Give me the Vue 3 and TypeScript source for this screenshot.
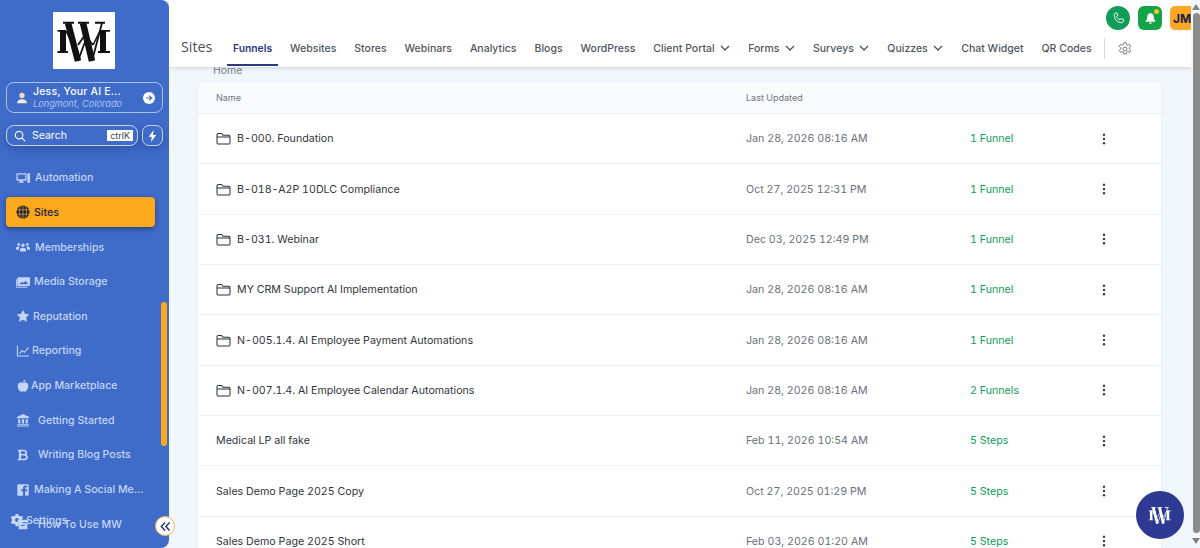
<script setup lang="ts">
interface Row { name: string; date: string; status: string; folder: boolean }
interface NavItem { label: string; gap: number; icon: string; active?: boolean }
interface Tab { label: string; caret?: boolean; active?: boolean }

const tabs: Tab[] = [
  { label: 'Funnels', active: true },
  { label: 'Websites' },
  { label: 'Stores' },
  { label: 'Webinars' },
  { label: 'Analytics' },
  { label: 'Blogs' },
  { label: 'WordPress' },
  { label: 'Client Portal', caret: true },
  { label: 'Forms', caret: true },
  { label: 'Surveys', caret: true },
  { label: 'Quizzes', caret: true },
  { label: 'Chat Widget' },
  { label: 'QR Codes' },
]

// Monogram strokes: x1, y1, x2, y2, width
const mark: number[][] = [
  [15, 11, 25, 49, 6.5],
  [25, 49, 33, 27, 1.8],
  [30, 11, 39, 49, 6.5],
  [39, 49, 49, 11, 1.8],
  [10, 10.8, 21, 10.8, 2],
  [25, 10.8, 36, 10.8, 2],
  [42, 10.8, 52, 10.8, 2],
  [10, 18, 10, 40, 6],
  [4.500, 18.800, 13, 18.800, 1.800],
  [4.500, 40, 15, 40, 1.800],
  [50, 18, 50, 40, 6],
  [47, 18.800, 57, 18.800, 1.800],
  [45, 40, 57, 40, 1.800],
  [13, 19, 24, 41, 1.600],
  [25, 33, 32, 23, 1.800],
  [32, 23, 40, 33, 1.800],
  [47, 19, 40, 33, 1.600],
]

const icons: Record<string, string> = {
  monitor: 'M1.500 2.500h9.500a1 1 0 0 1 1 1v6.500a1 1 0 0 1-1 1H7.500v1.300h1.500V13.500H3v-1.200h1.500V11H1.500a1 1 0 0 1-1-1V3.500a1 1 0 0 1 1-1zM2 4v5.500h8.500V4zM13 2.500h3v11h-3z',
  users: 'M8 4a2 2 0 1 1 0 4 2 2 0 0 1 0-4zM3 3.500a1.600 1.600 0 1 1 0 3.200 1.600 1.600 0 0 1 0-3.200zM13 3.500a1.600 1.600 0 1 1 0 3.200 1.600 1.600 0 0 1 0-3.200zM4.500 13v-1.500C4.500 9.800 6 8.800 8 8.800s3.500 1 3.500 2.700V13zM0 11V9.500C0 8.300 1.200 7.500 3 7.500c.6 0 1 .1 1.400.3-.8.7-1.200 1.600-1.200 2.700V11zM16 11V9.500c0-1.200-1.200-2-3-2-.6 0-1 .1-1.400.3.8.7 1.200 1.600 1.200 2.700V11z',
  media: 'M3 2.500h11.500A1.500 1.500 0 0 1 16 4v7a1.500 1.500 0 0 1-1.500 1.500H3A1.500 1.500 0 0 1 1.500 11V4A1.500 1.500 0 0 1 3 2.500zM3.500 10.500h10.500L11 6.500 8.500 9 7 7.700zM0 5v8.500A1 1 0 0 0 1 14.500h12v-1H1V5z',
  star: 'M8 1l2.200 4.500 5 .7-3.600 3.500.9 5L8 12.300l-4.500 2.400.9-5L.8 6.200l5-.7z',
  chart: 'M1 2h1.300v11H15v1.300H1zM3.500 10.500l3.300-4 2.700 2L14 3.500l1 .9-5.300 5.900-2.700-2-2.500 3z',
  apple: 'M8 4.500c1.200-.8 2.500-1 3.600-.5 1.500.6 2.400 2 2.400 4 0 3-2 6.500-3.800 6.500-.8 0-1.400-.5-2.200-.5s-1.400.5-2.200.5C4 14.500 2 11 2 8c0-2 .9-3.400 2.400-4 1.100-.5 2.400-.3 3.600.5zM8 4c0-1.500 1-3 2.600-3.300C10.700 2.400 9.600 3.800 8 4z',
  bank: 'M8 1l7 3.500V6H1V4.500zM2.500 7H5v5H2.500zM6.800 7h2.400v5H6.800zM11 7h2.500v5H11zM1.500 12.800h13V14h-13zM.8 14.500h14.400V15.500H.8z',
  bold: 'M2 2h7.500a3.300 3.300 0 0 1 2.500 5.400A3.600 3.600 0 0 1 10 14H2v-1.700h1.300V3.700H2zM5.800 3.700v3.200H9a1.600 1.600 0 0 0 0-3.200zM5.800 8.500v3.800h3.700a1.900 1.900 0 0 0 0-3.800z',
  fb: 'M2.500 1.500h11a1 1 0 0 1 1 1v11a1 1 0 0 1-1 1h-3V9.500h2l.4-2.300h-2.400V6c0-.7.3-1.100 1.100-1.100h1.300V2.900c-.4-.1-1.100-.1-1.700-.1C9 2.800 8 4 8 5.800v1.400H6v2.300h2v5H2.500a1 1 0 0 1-1-1v-11a1 1 0 0 1 1-1z',
  box: 'M2 3h12v3H2zM3 7h10v7H3zM6 9v1.200h4V9z',
}

const navItems: NavItem[] = [
  { label: 'Automation', gap: 5, icon: 'monitor' },
  { label: 'Sites', gap: 4, icon: 'globe', active: true },
  { label: 'Memberships', gap: 5, icon: 'users' },
  { label: 'Media Storage', gap: 4, icon: 'media' },
  { label: 'Reputation', gap: 3, icon: 'star' },
  { label: 'Reporting', gap: 2, icon: 'chart' },
  { label: 'App Marketplace', gap: 1, icon: 'apple' },
  { label: 'Getting Started', gap: 8, icon: 'bank' },
  { label: 'Writing Blog Posts', gap: 8, icon: 'bold' },
  { label: 'Making A Social Me...', gap: 4, icon: 'fb' },
  { label: 'How To Use MW', gap: 8, icon: 'box' },
]

const rows: Row[] = [
  { name: 'B-000. Foundation', date: 'Jan 28, 2026 08:16 AM', status: '1 Funnel', folder: true },
  { name: 'B-018-A2P 10DLC Compliance', date: 'Oct 27, 2025 12:31 PM', status: '1 Funnel', folder: true },
  { name: 'B-031. Webinar', date: 'Dec 03, 2025 12:49 PM', status: '1 Funnel', folder: true },
  { name: 'MY CRM Support AI Implementation', date: 'Jan 28, 2026 08:16 AM', status: '1 Funnel', folder: true },
  { name: 'N-005.1.4. AI Employee Payment Automations', date: 'Jan 28, 2026 08:16 AM', status: '1 Funnel', folder: true },
  { name: 'N-007.1.4. AI Employee Calendar Automations', date: 'Jan 28, 2026 08:16 AM', status: '2 Funnels', folder: true },
  { name: 'Medical LP all fake', date: 'Feb 11, 2026 10:54 AM', status: '5 Steps', folder: false },
  { name: 'Sales Demo Page 2025 Copy', date: 'Oct 27, 2025 01:29 PM', status: '5 Steps', folder: false },
  { name: 'Sales Demo Page 2025 Short', date: 'Feb 03, 2026 01:20 AM', status: '5 Steps', folder: false },
]
</script>

<template>
  <div class="app">
    <aside class="sidebar">
      <div class="logo">
        <svg viewBox="0 0 62 57" width="62" height="57" aria-hidden="true">
          <line v-for="(s, i) in mark" :key="i" :x1="s[0]" :y1="s[1]" :x2="s[2]" :y2="s[3]" :stroke-width="s[4]" stroke="#111" />
        </svg>
      </div>

      <div class="account">
        <svg class="acc-user" viewBox="0 0 16 16" width="12" height="12" aria-hidden="true"><circle cx="8" cy="4.500" r="3.500" fill="#f7d9bd" /><path d="M1.500 15c0-3.600 2.800-5.500 6.500-5.500s6.500 1.900 6.500 5.500z" fill="#fbeadb" /></svg>
        <div class="acc-text">
          <div class="acc-name">Jess, Your AI E...</div>
          <div class="acc-loc">Longmont, Colorado</div>
        </div>
        <svg class="acc-arrow" viewBox="0 0 16 16" width="12" height="12" aria-hidden="true"><circle cx="8" cy="8" r="8" fill="#fff" /><path d="M4 8h7.500M8.300 4.800 11.500 8l-3.200 3.200" fill="none" stroke="#3f6bc9" stroke-width="1.600" /></svg>
      </div>

      <div class="search-row">
        <div class="search">
          <svg viewBox="0 0 16 16" width="12" height="12" aria-hidden="true"><circle cx="6.800" cy="6.800" r="5" fill="none" stroke="#fff" stroke-width="1.500" /><path d="m10.500 10.500 4.300 4.300" stroke="#fff" stroke-width="1.500" /></svg>
          <span class="search-label">Search</span>
          <span class="kbd">ctrlK</span>
        </div>
        <div class="bolt">
          <svg viewBox="0 0 12 16" width="9" height="12" aria-hidden="true"><path d="M7.500 0 1 9h4l-1 7 7-9.500H6.800z" fill="#fff" /></svg>
        </div>
      </div>

      <nav class="nav">
        <div v-for="item in navItems" :key="item.label" class="nav-item" :class="{ active: item.active }" :style="{ gap: item.gap + 'px' }">
          <svg class="nav-icon" viewBox="0 0 16 16" width="14" height="14" aria-hidden="true">
            <g v-if="item.icon === 'globe'">
              <circle cx="8" cy="8" r="7.500" fill="#1a2340" />
              <path d="M1 5.500h14M1 10.500h14M8 .5v15M5.200 1.500c-1.600 4-1.600 9 0 13M10.800 1.500c1.600 4 1.600 9 0 13" fill="none" stroke="#fca91b" stroke-width=".8" />
            </g>
            <path v-else :d="icons[item.icon]" fill="currentColor" fill-rule="evenodd" />
          </svg>
          <span class="nav-label">{{ item.label }}</span>
        </div>
      </nav>

      <div class="settings">
        <svg viewBox="0 0 16 16" width="14" height="14" aria-hidden="true"><path d="M6.500 1h3l.4 2 1.700.9 1.900-.7 1.500 2.600-1.500 1.300v1.800l1.500 1.300-1.500 2.600-1.900-.7-1.700.9-.4 2h-3l-.4-2-1.700-.9-1.900.7L.9 10.200l1.500-1.300V7.100L.9 5.800l1.500-2.600 1.900.7L6 3zM8 5.700a2.300 2.300 0 1 0 0 4.600 2.300 2.300 0 0 0 0-4.600z" fill="#c9d7f3" fill-rule="evenodd" /></svg>
        <span>Settings</span>
      </div>
      <div class="side-scroll"></div>
    </aside>

    <button class="collapse" aria-label="Collapse">
      <svg viewBox="0 0 12 12" width="11" height="11" aria-hidden="true"><path d="M5.500 1.500 1.500 6l4 4.500M10.500 1.500 6.500 6l4 4.500" fill="none" stroke="#1f2f7a" stroke-width="1.600" /></svg>
    </button>

    <main class="main">
      <header class="topbar">
        <span class="title">Sites</span>
        <div class="tabs">
          <div v-for="tab in tabs" :key="tab.label" class="tab" :class="{ active: tab.active }">
            <span>{{ tab.label }}</span>
            <svg v-if="tab.caret" viewBox="0 0 10 6" width="10" height="6" aria-hidden="true"><path d="M1 1l4 4 4-4" fill="none" stroke="#4a5260" stroke-width="1.300" /></svg>
          </div>
        </div>
        <span class="sep"></span>
        <svg class="gear" viewBox="0 0 24 24" width="16" height="16" aria-hidden="true"><path d="M10.300 2.500h3.400l.6 2.900 1.900.9 2.600-1.200 1.800 2.900-2.100 2v2l2.100 2-1.800 2.900-2.600-1.200-1.900.9-.6 2.900h-3.400l-.6-2.900-1.900-.9-2.600 1.200-1.800-2.900 2.100-2v-2l-2.100-2 1.800-2.900 2.600 1.200 1.900-.9z" fill="none" stroke="#6b7280" stroke-width="1.400" stroke-linejoin="round" /><circle cx="12" cy="12" r="3" fill="none" stroke="#6b7280" stroke-width="1.400" /></svg>
      </header>

      <div class="content">
        <div class="crumb">Home</div>
        <section class="table">
          <div class="row head">
            <span>Name</span>
            <span>Last Updated</span>
          </div>
          <div v-for="row in rows" :key="row.name" class="row">
            <span class="name">
              <svg v-if="row.folder" viewBox="0 0 16 14" width="15" height="13" aria-hidden="true"><path d="M1 3a1.500 1.500 0 0 1 1.500-1.500h3.200L7.500 3.500h6A1.500 1.500 0 0 1 15 5v6.500a1.500 1.500 0 0 1-1.500 1.500h-11A1.500 1.500 0 0 1 1 11.500zM1 5.500h14" fill="none" stroke="#2a2f38" stroke-width="1.100" /></svg>
              <span>{{ row.name }}</span>
            </span>
            <span class="date">{{ row.date }}</span>
            <span class="status">{{ row.status }}</span>
            <svg class="dots" viewBox="0 0 4 14" width="4" height="12" aria-hidden="true"><circle cx="2" cy="2" r="1.400" /><circle cx="2" cy="7" r="1.400" /><circle cx="2" cy="12" r="1.400" /></svg>
          </div>
        </section>
      </div>
    </main>

    <div class="top-actions">
      <span class="act phone">
        <svg viewBox="0 0 24 24" width="15" height="15" aria-hidden="true"><path d="M6.500 3.500 9.500 3l1.500 4-2 1.500c1 2.500 3 4.500 5.500 5.500L16 12l4 1.500-.5 3c-.2 1.500-1.500 2.500-3 2.300C10 18 6 14 5.200 7.500c-.2-1.700.3-3.500 1.300-4z" fill="none" stroke="#fff" stroke-width="1.500" stroke-linejoin="round" /></svg>
      </span>
      <span class="act bell">
        <svg viewBox="0 0 16 16" width="13" height="13" aria-hidden="true"><path d="M8 1.500c-2.500 0-4 2-4 4.500 0 2.500-1 4-2 5v1h12v-1c-1-1-2-2.500-2-5 0-2.500-1.500-4.500-4-4.500zM6.300 13h3.400a1.700 1.700 0 0 1-3.400 0z" fill="#fff" /></svg>
        <i class="bell-dot"></i>
      </span>
      <span class="act avatar">JM</span>
    </div>

    <div class="page-scroll">
      <i class="arr up"></i>
      <i class="thumb"></i>
      <i class="arr down"></i>
    </div>

    <div class="fab">
      <svg viewBox="0 0 62 57" width="26" height="24" aria-hidden="true">
        <line v-for="(s, i) in mark" :key="i" :x1="s[0]" :y1="s[1]" :x2="s[2]" :y2="s[3]" :stroke-width="s[4]" stroke="#fff" />
      </svg>
    </div>
  </div>
</template>

<style scoped>
.app {
  position: relative;
  display: flex;
  width: 1200px;
  height: 548px;
  overflow: hidden;
  background: #f1f6fb;
  font-family: Inter, "Liberation Sans", sans-serif;
}

.sidebar {
  position: relative;
  flex: 0 0 169px;
  height: 548px;
  box-sizing: border-box;
  padding-top: 12px;
  background: #3f6bc9;
  border-radius: 0 8px 8px 0;
  overflow: hidden;
  z-index: 2;
}

.logo {
  display: flex;
  width: 62px;
  height: 57px;
  margin: 0 0 0 53px;
  background: #fff;
}

.account {
  display: flex;
  align-items: center;
  box-sizing: border-box;
  width: 157px;
  height: 31px;
  margin: 13px 0 0 6px;
  padding: 0 7px 0 9px;
  border: 1px solid #a9c0ea;
  border-radius: 8px;
  color: #fff;
}

.acc-text {
  flex: 1;
  min-width: 0;
  margin-left: 5px;
}

.acc-name {
  font-size: 10.500px;
  line-height: 12px;
  font-weight: 500;
  letter-spacing: .2px;
  white-space: nowrap;
}

.acc-loc {
  font-size: 9.200px;
  line-height: 11px;
  font-style: italic;
  color: #a9c3f2;
  white-space: nowrap;
}

.search-row {
  display: flex;
  gap: 4px;
  margin: 12px 0 0 6px;
}

.search {
  display: flex;
  align-items: center;
  box-sizing: border-box;
  width: 132px;
  height: 21px;
  padding: 0 4px 0 7px;
  border: 1px solid #c5d5f3;
  border-radius: 8px;
  box-shadow: 0 3px 8px rgba(22, 44, 110, .35);
  color: #fff;
}

.search-label {
  flex: 1;
  margin-left: 6px;
  font-size: 10.500px;
  font-weight: 400;
}

.kbd {
  padding: 0 3px;
  height: 11px;
  line-height: 11px;
  background: #fff;
  color: #444;
  font-size: 9px;
}

.bolt {
  display: flex;
  align-items: center;
  justify-content: center;
  box-sizing: border-box;
  width: 21px;
  height: 21px;
  border: 1px solid #c5d5f3;
  border-radius: 7px;
  box-shadow: 0 3px 8px rgba(22, 44, 110, .35);
}

.nav {
  display: flex;
  flex-direction: column;
  margin-top: 14.500px;
}

.nav-item {
  display: flex;
  align-items: center;
  flex: 0 0 34.650px;
  box-sizing: border-box;
  padding-left: 16px;
  color: #c4d5f6;
  font-size: 10.600px;
  font-weight: 500;
  white-space: nowrap;
}

.nav-item.active {
  position: relative;
  width: 149px;
  margin-left: 6px;
  padding-left: 10px;
  color: #1a2340;
  background: #fca91b;
  border-radius: 4px;
  box-shadow: 0 2px 5px rgba(20, 30, 70, .55);
  flex-basis: 30px;
  margin-top: 2.300px;
  margin-bottom: 2.300px;
}

.nav-icon {
  flex: 0 0 14px;
}

.settings {
  position: absolute;
  left: 10px;
  top: 513px;
  display: flex;
  align-items: center;
  gap: 2px;
  color: #c4d5f6;
  font-size: 10.600px;
  font-weight: 500;
}

.side-scroll {
  position: absolute;
  left: 161px;
  top: 302px;
  width: 6px;
  height: 144px;
  background: #fca91b;
  border-radius: 3px;
}

.collapse {
  position: absolute;
  left: 155px;
  top: 516px;
  display: flex;
  align-items: center;
  justify-content: center;
  width: 20px;
  height: 20px;
  padding: 0;
  border: 1px solid #e8b94e;
  border-radius: 50%;
  background: #fff;
  z-index: 3;
}

.main {
  flex: 1;
  min-width: 0;
  display: flex;
  flex-direction: column;
}

.topbar {
  position: relative;
  display: flex;
  align-items: flex-end;
  flex: 0 0 67px;
  box-sizing: border-box;
  padding-left: 12px;
  background: #fff;
  box-shadow: 0 1px 4px rgba(40, 60, 90, .18);
  z-index: 1;
}

.title {
  margin-bottom: 11px;
  width: 52px;
  font-family: "Open Sans", sans-serif;
  font-size: 14.300px;
  color: #4a4f57;
}

.tabs {
  display: flex;
  gap: 18px;
  height: 67px;
  align-items: flex-end;
}

.tab {
  display: flex;
  align-items: center;
  gap: 5.500px;
  box-sizing: border-box;
  height: 38px;
  font-size: 10.500px;
  font-weight: 500;
  color: #4f5661;
  white-space: nowrap;
}

.tab.active {
  position: relative;
  color: #2b3a80;
  font-size: 10.300px;
  font-weight: 600;
}

.tab.active::after {
  content: "";
  position: absolute;
  left: -6px;
  right: -6px;
  bottom: 1px;
  height: 2px;
  background: #2b3a80;
}

.sep {
  align-self: flex-end;
  width: 1px;
  height: 21px;
  margin: 0 0 8px 12px;
  background: #d5d9df;
}

.gear {
  align-self: flex-end;
  margin: 0 0 10px 12px;
}

.content {
  flex: 1;
  min-height: 0;
  padding: 0 39px 0 29px;
}

.crumb {
  height: 15px;
  padding-left: 15px;
  font-size: 10.500px;
  line-height: 8px;
  color: #7a808a;
}

.table {
  background: #fff;
  border-radius: 6px 6px 0 0;
  box-shadow: 0 0 3px rgba(60, 80, 110, .08);
}

.row {
  display: grid;
  grid-template-columns: 530px 224px 132px 4px;
  align-items: center;
  box-sizing: border-box;
  height: 50.350px;
  padding-left: 18px;
  border-bottom: 1px solid #eef1f4;
  font-size: 10.670px;
  font-weight: 400;
  font-feature-settings: "tnum";
  color: #30353d;
  white-space: nowrap;
}

.row.head {
  height: 32px;
  background: #f8fafc;
  color: #6f7682;
  font-size: 9px;
  border-radius: 6px 6px 0 0;
}

.name {
  display: flex;
  align-items: center;
  gap: 6px;
}

.date {
  color: #6a717c;
}

.status {
  color: #0f9d58;
}

.dots {
  fill: #353a42;
}

.top-actions {
  position: absolute;
  top: 6px;
  left: 1106px;
  display: flex;
  align-items: center;
  gap: 7px;
  z-index: 4;
}

.act {
  position: relative;
  display: flex;
  align-items: center;
  justify-content: center;
  width: 24px;
  height: 24px;
  font-size: 12px;
  font-weight: 700;
}

.phone {
  background: #0f9d58;
  border-radius: 50%;
}

.bell {
  background: #15a34a;
  border-radius: 6px;
  margin-left: 1px;
}

.bell-dot {
  position: absolute;
  top: 3px;
  right: 3px;
  width: 5px;
  height: 5px;
  background: #f5c518;
  border-radius: 50%;
}

.avatar {
  width: 21px;
  margin-left: 1px;
  background: #fca62a;
  border-radius: 5px 0 0 5px;
  color: #1a2340;
  justify-content: flex-start;
  padding-left: 3px;
  box-sizing: border-box;
  overflow: hidden;
}

.page-scroll {
  position: absolute;
  top: 0;
  right: 0;
  bottom: 0;
  display: flex;
  flex-direction: column;
  align-items: center;
  width: 9px;
  background: #f1f6fb;
  z-index: 3;
}

.thumb {
  flex: 1;
  width: 7px;
  margin: 3px 0 5px 1px;
  background: #8b8b8b;
  border-radius: 4px;
}

.arr {
  width: 0;
  height: 0;
  margin-top: 4px;
  border-left: 4px solid transparent;
  border-right: 4px solid transparent;
}

.arr.up {
  border-bottom: 6px solid #7f7f7f;
}

.arr.down {
  margin: 0 0 4px;
  border-top: 6px solid #7f7f7f;
}

.fab {
  position: absolute;
  left: 1136px;
  top: 491px;
  display: flex;
  align-items: center;
  justify-content: center;
  width: 48px;
  height: 48px;
  background: #2e3a92;
  border-radius: 50%;
  z-index: 4;
}
</style>
